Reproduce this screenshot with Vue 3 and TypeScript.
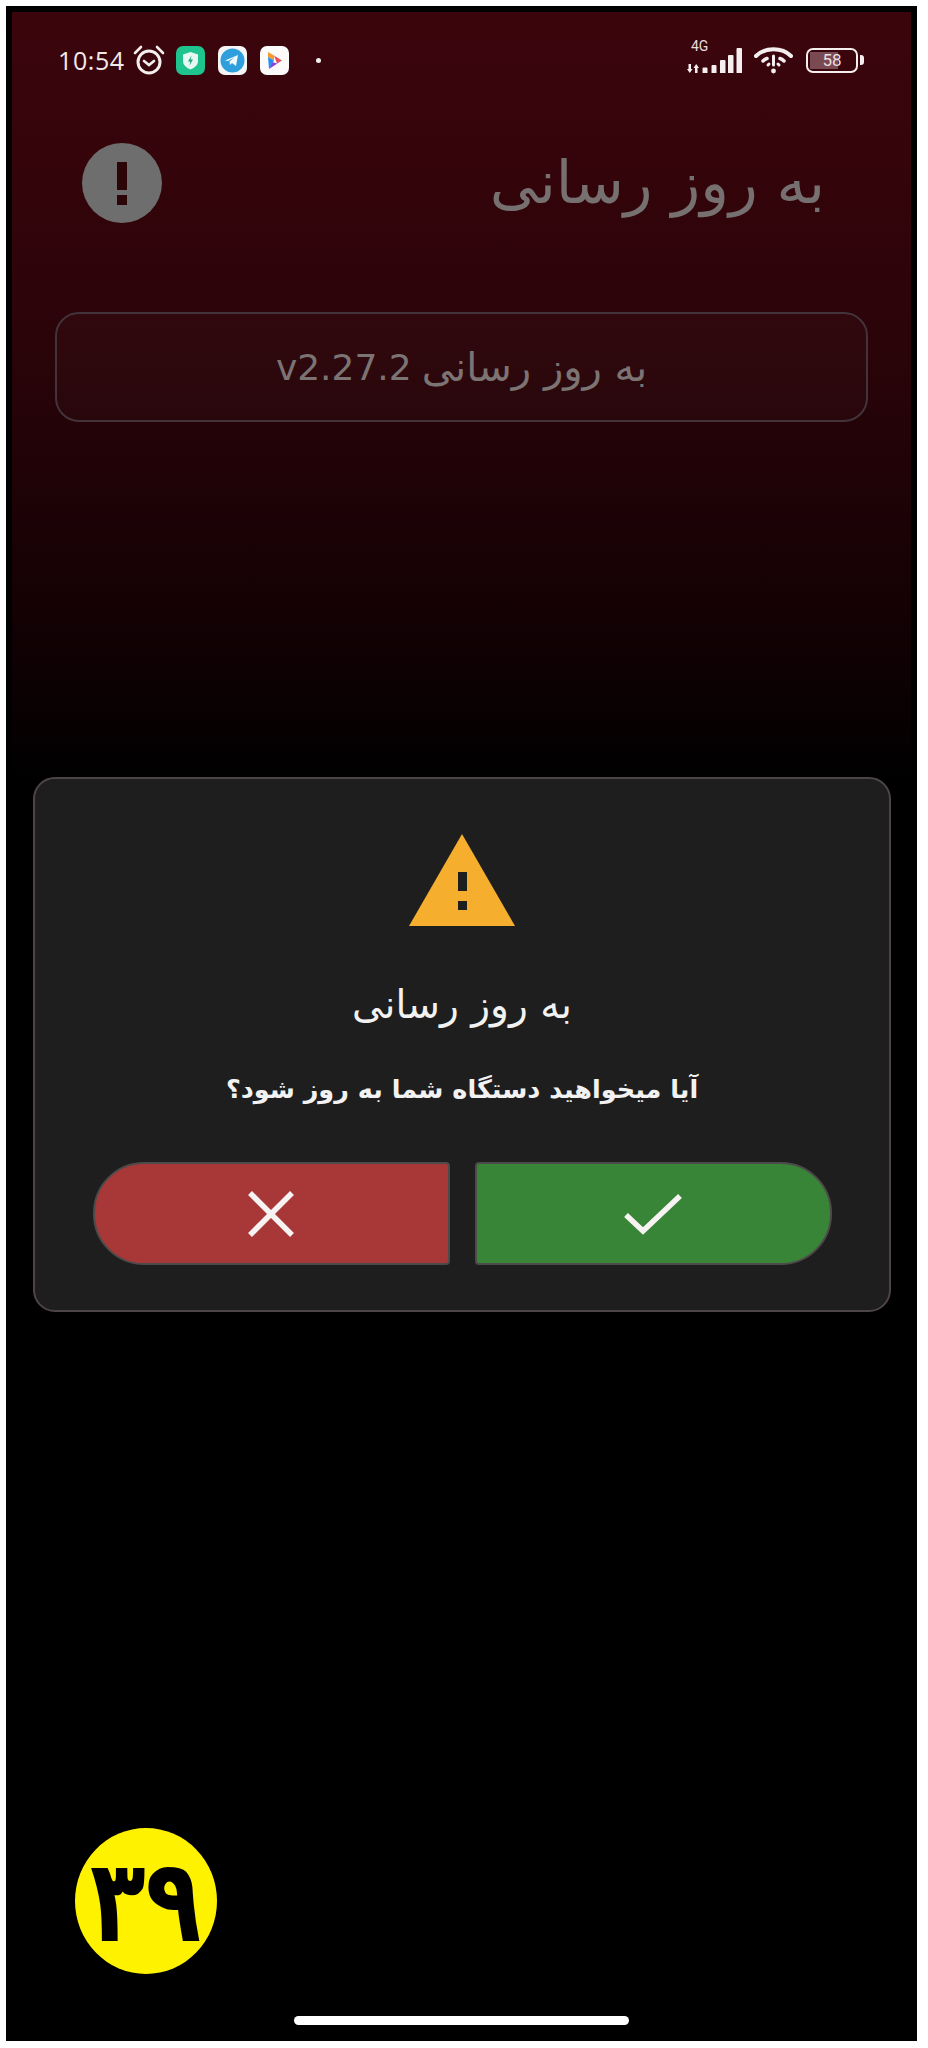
<template>
  <div class="frame">
    <div class="screen">
      <div class="status">
        <div class="status-left">
          <span class="time">10:54</span>
          <svg class="alarm" width="32" height="32" viewBox="0 0 32 32" fill="none" stroke="#f4eeee" stroke-linecap="round">
            <circle cx="16" cy="18" r="11" stroke-width="3" />
            <path d="M11 17l5 4 5-4" stroke-width="2.600" />
            <path d="M2 9l6-6M30 9l-6-6" stroke-width="2.600" />
          </svg>
          <svg class="app" width="29" height="29" viewBox="0 0 29 29">
            <rect width="29" height="29" rx="7" fill="#1fc38d" />
            <path d="M14.500 6l7.500 2.600v6.400c0 4-3.200 6.800-7.500 8.500C10.200 21.800 7 19 7 15V8.600z" fill="#e6f8f1" />
            <path d="M15.500 9.500l-3.500 6h2.300l-.8 4 3.500-6h-2.300z" fill="#1fa67a" />
          </svg>
          <svg class="app" width="29" height="29" viewBox="0 0 29 29">
            <rect width="29" height="29" rx="7" fill="#f5f5f5" />
            <circle cx="14.500" cy="14.500" r="12" fill="#2e9fdc" />
            <path d="M7 14.500l13-5.500-2 11-4-3-2 2-.5-3.500 5-4-6.500 3.500z" fill="#f2f7fb" />
          </svg>
          <svg class="app" width="29" height="29" viewBox="0 0 29 29">
            <rect width="29" height="29" rx="7" fill="#fbfbfb" />
            <path d="M8 6l6 3.500v5L8 11z" fill="#f59a2c" />
            <path d="M14 9.500l8 5-5 3z" fill="#e8505b" />
            <path d="M22 14.500L9 23l3-7 5 1.500z" fill="#8a3fe0" />
            <path d="M8 11l6 3.500L9 23z" fill="#2a8df0" />
          </svg>
          <span class="dot"></span>
        </div>
        <div class="status-right">
          <div class="signal">
            <span class="net">4G</span>
            <svg width="56" height="26" viewBox="0 0 56 26" fill="#f4eeee">
              <path d="M1.500 16h2.500v5h1.500l-2.700 4-2.800-4h1.500zM8 25h2.500v-5H12l-2.800-4-2.700 4H8z" />
              <path d="M15.500 20.500q0-1 1-1h3q1 0 1 1V25h-5zM24.500 18q0-1 1-1h3q1 0 1 1v7h-5zM33 13q0-1 1-1h3.500q1 0 1 1v12H33zM41 8q0-1 1-1h3.500q1 0 1 1v17H41zM49.500 1q0-1 1-1H54q1 0 1 1v24h-5.500z" />
            </svg>
          </div>
          <svg class="wifi" width="39" height="28" viewBox="0 0 39 28" fill="none" stroke="#f4eeee" stroke-linecap="round">
            <path d="M2 10C11 1 28 1 37 10" stroke-width="4" />
            <path d="M9 15c1-1 2-2 4-2.500M30 15c-1-1-2-2-4-2.500" stroke-width="3.500" />
            <path d="M14 19l1-1M25 19l-1-1" stroke-width="3" />
            <path d="M19.500 10v9" stroke-width="3" />
            <circle cx="19.500" cy="25" r="2.400" fill="#f4eeee" stroke="none" />
          </svg>
          <div class="battery">
            <div class="cell">
              <span class="level"></span>
              <span class="pct">58</span>
            </div>
            <span class="tip"></span>
          </div>
        </div>
      </div>

      <div class="header">
        <svg class="info" width="80" height="80" viewBox="0 0 80 80">
          <circle cx="40" cy="40" r="40" fill="#6f6e6e" />
          <rect x="35" y="19" width="10" height="28" fill="#2c0508" />
          <rect x="35" y="52" width="10" height="10" fill="#2c0508" />
        </svg>
        <h1 class="title" dir="rtl">به روز رسانی</h1>
      </div>

      <div class="version" dir="rtl">به روز رسانی <span class="version-num">v2.27.2</span></div>

      <div class="dialog">
        <svg class="warn" width="106" height="92" viewBox="0 0 106 92">
          <path d="M53 0l53 92H0z" fill="#f5ae2d" />
          <rect x="49" y="38" width="9" height="19" fill="#1e1e1e" />
          <rect x="49" y="67" width="9" height="9" fill="#1e1e1e" />
        </svg>
        <h2 class="dialog-title" dir="rtl">به روز رسانی</h2>
        <p class="dialog-text" dir="rtl">آیا میخواهید دستگاه شما به روز شود؟</p>
        <div class="actions">
          <button class="btn btn-no">
            <svg width="46" height="46" viewBox="0 0 46 46" fill="none" stroke="#f7f3f3" stroke-width="5.500">
              <path d="M2 2l42 42M44 2L2 44" />
            </svg>
          </button>
          <button class="btn btn-yes">
            <svg width="58" height="42" viewBox="0 0 58 42" fill="none" stroke="#f7f3f3" stroke-width="5.500">
              <path d="M2 22l17 16L56 3" />
            </svg>
          </button>
        </div>
      </div>

      <div class="badge"><span class="badge-num">۳۹</span></div>
      <div class="home"></div>
    </div>
  </div>
</template>

<script setup lang="ts">
</script>

<style>
html,
body {
  background: #fff;
}
</style>

<style scoped>
.frame {
  width: 911px;
  height: 2035px;
  margin: 6px 0 0 6px;
  border: 6px solid #000;
  box-sizing: border-box;
  background: #000;
  font-family: "DejaVu Sans", "Noto Sans", sans-serif;
}

.screen {
  position: relative;
  height: 100%;
  display: flex;
  flex-direction: column;
  background: linear-gradient(to bottom, #3c050c 0, #2a0409 340px, #120104 620px, #000 770px);
}

.status {
  display: flex;
  justify-content: space-between;
  align-items: center;
  height: 60px;
  margin-top: 18px;
  padding: 0 47px 0 46px;
}

.status-left,
.status-right {
  display: flex;
  align-items: center;
}

.time {
  width: 66px;
  font-family: "Open Sans", sans-serif;
  font-size: 25px;
  font-weight: 400;
  color: #f2eaea;
  letter-spacing: 0.6px;
}

.alarm {
  margin: 0 11px 0 9px;
}

.app {
  margin-right: 13px;
}

.dot {
  width: 5px;
  height: 5px;
  margin-left: 14px;
  border-radius: 50%;
  background: #eee;
}

.signal {
  position: relative;
  height: 28px;
  display: flex;
  align-items: flex-end;
}

.net {
  position: absolute;
  left: 4px;
  top: -8px;
  font-family: "Roboto", sans-serif;
  font-size: 14px;
  color: #e6dcdc;
}

.wifi {
  margin-left: 11px;
}

.battery {
  display: flex;
  align-items: center;
  margin-left: 13px;
}

.cell {
  position: relative;
  width: 52px;
  height: 25px;
  box-sizing: border-box;
  border: 2px solid #f4eeee;
  border-radius: 7px;
  overflow: hidden;
  display: flex;
  align-items: center;
  justify-content: center;
}

.level {
  position: absolute;
  left: 2px;
  top: 2px;
  bottom: 2px;
  width: 58%;
  background: #7a4a52;
}

.pct {
  position: relative;
  font-family: "Roboto", sans-serif;
  font-size: 17px;
  color: #eadfe0;
}

.tip {
  width: 4px;
  height: 10px;
  margin-left: 2px;
  border-radius: 0 3px 3px 0;
  background: #f4eeee;
}

.header {
  display: flex;
  justify-content: space-between;
  align-items: center;
  height: 80px;
  margin-top: 53px;
  padding: 0 86px 0 70px;
}

.title {
  margin: 0;
  font-size: 59.500px;
  font-weight: 400;
  line-height: 1;
  color: #767070;
}

.version {
  display: flex;
  align-items: center;
  justify-content: center;
  gap: 10px;
  height: 110px;
  margin: 89px 43px 0;
  box-sizing: border-box;
  border: 2px solid #43333a;
  border-radius: 24px;
  background: rgba(255, 255, 255, 0.02);
  font-size: 40px;
  color: #7c7474;
}

.version-num {
  font-size: 36px;
}

.dialog {
  position: absolute;
  left: 21px;
  top: 765px;
  width: 858px;
  height: 535px;
  box-sizing: border-box;
  border: 2px solid #4d4545;
  border-radius: 22px;
  background: #1e1e1e;
  display: flex;
  flex-direction: column;
  align-items: center;
  padding-top: 55px;
}

.warn {
  flex: none;
}

.dialog-title {
  margin: 59px 0 0;
  font-size: 39px;
  font-weight: 400;
  line-height: 1;
  color: #f2f2f2;
}

.dialog-text {
  margin: 50px 0 0;
  font-size: 25.500px;
  font-weight: 700;
  line-height: 1.2;
  color: #f2f2f2;
}

.actions {
  display: flex;
  gap: 25px;
  margin-top: auto;
  margin-bottom: 45px;
}

.btn {
  display: flex;
  align-items: center;
  justify-content: center;
  width: 357px;
  height: 103px;
  padding: 0;
  box-sizing: border-box;
  border: 2px solid #4f4a4a;
}

.btn-no {
  border-radius: 51px 4px 4px 51px;
  background: #a83838;
}

.btn-yes {
  border-radius: 4px 51px 51px 4px;
  background: #388538;
}

.badge {
  position: absolute;
  left: 63px;
  top: 1816px;
  width: 142px;
  height: 146px;
  border-radius: 50%;
  background: #fff200;
  display: flex;
  align-items: center;
  justify-content: center;
  font-size: 96px;
  font-weight: 700;
  line-height: 1;
  color: #000;
}

.badge-num {
  transform: scale(0.95, 1.2);
}

.home {
  position: absolute;
  left: 282px;
  top: 2004px;
  width: 335px;
  height: 9px;
  border-radius: 5px;
  background: #fff;
}
</style>
